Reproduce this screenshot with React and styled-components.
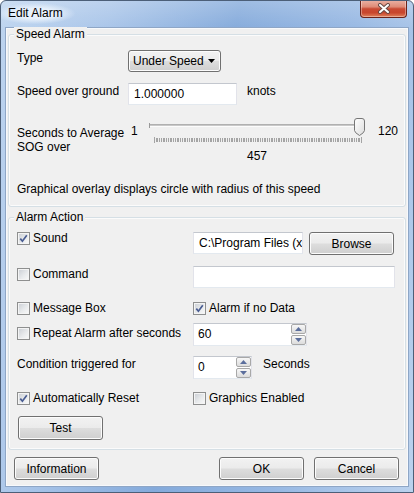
import React from 'react';
import styled, {createGlobalStyle} from 'styled-components';

const GlobalStyle = createGlobalStyle`
  html, body {
    margin: 0;
    padding: 0;
  }
  body {
    font-family: "Liberation Sans", Arial, sans-serif;
    font-size: 12px;
    color: #000;
    background: #fff;
  }
  * {
    box-sizing: border-box;
  }
`;

const buttonFace = `
  border: 1px solid #707070;
  border-radius: 3px;
  background: linear-gradient(180deg, #f2f2f2 0%, #ebebeb 48%, #dddddd 52%, #cfcfcf 100%);
  box-shadow: inset 0 0 0 1px #fcfcfc;
`;

const Window = styled.div`
  width: 414px;
  height: 493px;
  display: flex;
  flex-direction: column;
  overflow: hidden;
  border: 1px solid #4c5f78;
  border-radius: 6px 6px 0 0;
  background:
    linear-gradient(180deg, rgba(255, 255, 255, 0.22) 0%, rgba(255, 255, 255, 0) 30px),
    linear-gradient(100deg, #bdd4ef 0%, #a9c5e9 22%, #84aadb 48%, #97b8e3 72%, #bbd2ee 100%);
`;

const TitleBar = styled.div`
  flex: none;
  height: 27px;
  display: flex;
  justify-content: space-between;
  align-items: flex-start;
  padding-left: 7px;
`;

const Title = styled.span`
  margin: 2px 0 0 -12px;
  padding: 3px 12px;
  line-height: 15px;
  background: radial-gradient(ellipse at center, rgba(236, 244, 253, 0.9) 35%, rgba(236, 244, 253, 0) 72%);
`;

const CloseButton = styled.div`
  width: 47px;
  height: 18px;
  margin: -1px 6px 0 0;
  display: flex;
  align-items: center;
  justify-content: center;
  border: 1px solid #6b231a;
  border-top: none;
  border-radius: 0 0 4px 4px;
  background: linear-gradient(180deg, #ebb3a6 0%, #df8b77 40%, #c94a33 52%, #c8462d 75%, #e0825d 100%);
  box-shadow: inset 0 0 0 1px rgba(255, 255, 255, 0.35);
`;

const Client = styled.div`
  flex: 1;
  display: flex;
  flex-direction: column;
  margin: 0 5px 6px 5px;
  padding: 0 1px;
  background: #f0f0f0;
  border: 1px solid #f7f9fc;
  box-shadow: 0 0 0 1px #8ea6c6;
`;

const Group = styled.div`
  display: flex;
  flex-direction: column;
  margin-top: ${p => p.$top}px;
  padding: 0 8px 9px;
  border: 1px solid #d5dfe5;
  border-radius: 3px;
  box-shadow: inset 0 0 0 1px #fbfbfb;
`;

const Caption = styled.span`
  align-self: flex-start;
  margin: -8px 0 0 -3px;
  padding: 0 2px;
  line-height: 14px;
  background: #f0f0f0;
`;

const Row = styled.div`
  display: flex;
  align-items: flex-start;
  height: ${p => p.$h}px;
  margin-top: ${p => p.$top}px;
`;

const Label = styled.span`
  flex: none;
  width: ${p => (p.$w ? `${p.$w}px` : 'auto')};
  margin-left: ${p => p.$ml || 0}px;
  padding-top: ${p => (p.$pt === undefined ? 1 : p.$pt)}px;
  line-height: ${p => p.$lh || 15}px;
  white-space: nowrap;
`;

const Note = styled.div`
  margin-top: 19px;
  line-height: 15px;
`;

const TextBox = styled.div`
  flex: none;
  width: ${p => p.$w}px;
  height: 22px;
  padding: 0 5px;
  line-height: 20px;
  white-space: nowrap;
  overflow: hidden;
  background: #fff;
  border: 1px solid;
  border-color: #c3c7ce #e2e3ea #e3e9ef #e2e3ea;
`;

const Button = styled.button`
  flex: none;
  width: 85px;
  height: ${p => p.$h || 23}px;
  margin-left: ${p => p.$ml || 0}px;
  padding: 0;
  font-family: inherit;
  font-size: 12px;
  color: #000;
  ${buttonFace}
`;

const Select = styled.div`
  flex: none;
  width: 93px;
  height: 22px;
  display: flex;
  align-items: center;
  justify-content: space-between;
  padding: 0 5px 0 4px;
  ${buttonFace}
`;

const CheckItem = styled.label`
  flex: none;
  display: flex;
  align-items: center;
  gap: 3px;
  width: ${p => (p.$w ? `${p.$w}px` : 'auto')};
  margin-top: ${p => p.$top || 0}px;
  line-height: 13px;
  white-space: nowrap;
`;

const CheckBox = styled.span`
  flex: none;
  width: 13px;
  height: 13px;
  display: flex;
  align-items: center;
  justify-content: center;
  border: 1px solid #8e8f8f;
  background: linear-gradient(135deg, #c9cdd3 0%, #e8eaec 55%, #fafafa 100%);
  box-shadow: inset 0 0 0 1px #f4f4f4;
`;

const Spin = styled.div`
  flex: none;
  display: flex;
  width: ${p => p.$w}px;
  height: 23px;
  background: #fff;
  border: 1px solid;
  border-color: #c3c7ce #e2e3ea #e3e9ef #e2e3ea;
`;

const SpinValue = styled.span`
  flex: 1;
  padding-left: 4px;
  line-height: 21px;
`;

const SpinButtons = styled.div`
  flex: none;
  width: 15px;
  display: flex;
  flex-direction: column;
  gap: 1px;
`;

const SpinArrow = styled.div`
  flex: 1;
  display: flex;
  align-items: center;
  justify-content: center;
  border: 1px solid #a8a8a8;
  border-radius: 2px;
  background: linear-gradient(180deg, #f7f7f7 0%, #dcdcdc 100%);
`;

const SliderBox = styled.div`
  flex: none;
  width: 216px;
  display: flex;
  flex-direction: column;
`;

const SliderValue = styled.div`
  margin-top: 5px;
  line-height: 14px;
  text-align: center;
`;

const ButtonBar = styled.div`
  display: flex;
  margin-top: 7px;
  padding: 0 7px 0 6px;
`;

const Spacer = styled.div`
  flex: 1;
`;

const Check = ({checked, children, w, top}) => (
  <CheckItem $w={w} $top={top}>
    <CheckBox>
      {checked && (
        <svg width="9" height="9" viewBox="0 0 9 9">
          <path d="M1.3 4.6 L3.4 7.2 L7.8 1.2" fill="none" stroke="#4a5d92" strokeWidth="1.7" />
        </svg>
      )}
    </CheckBox>
    <span>{children}</span>
  </CheckItem>
);

const SpinControl = ({w, value}) => (
  <Spin $w={w}>
    <SpinValue>{value}</SpinValue>
    <SpinButtons>
      <SpinArrow>
        <svg width="7" height="4" viewBox="0 0 7 4">
          <polygon points="3.5,0 7,4 0,4" fill="#5b6e9c" />
        </svg>
      </SpinArrow>
      <SpinArrow>
        <svg width="7" height="4" viewBox="0 0 7 4">
          <polygon points="0,0 7,0 3.5,4" fill="#5b6e9c" />
        </svg>
      </SpinArrow>
    </SpinButtons>
  </Spin>
);

const ticks = Array.from({length: 120}, (_, i) => 5.5 + Math.round((i * 207) / 119));

const Slider = () => (
  <svg width="218" height="26" viewBox="0 0 218 26">
    <defs>
      <linearGradient id="thumb" x1="0" y1="0" x2="1" y2="1">
        <stop offset="0" stopColor="#ffffff" />
        <stop offset="1" stopColor="#dcdcdc" />
      </linearGradient>
    </defs>
    <rect x="0" y="5" width="1" height="5" fill="#9a9a9a" />
    <rect x="1" y="6" width="212" height="1" fill="#b0b0b0" />
    <rect x="1" y="7" width="212" height="1" fill="#c8c8c8" />
    <rect x="1" y="8" width="212" height="1" fill="#fcfcfc" />
    {ticks.map((x, i) => (
      <line
        key={i}
        x1={x}
        x2={x}
        y1={i === 0 || i === 119 ? 19 : 20}
        y2={i === 0 || i === 119 ? 25 : 24}
        stroke="#a4a4a4"
        strokeWidth="1"
      />
    ))}
    <path
      d="M205.5 3 Q205.5 0.5 208 0.5 H213 Q215.5 0.5 215.5 3 V12.5 Q215.5 14.5 210.5 17.5 Q205.5 14.5 205.5 12.5 Z"
      fill="url(#thumb)"
      stroke="#767676"
      strokeWidth="1"
    />
  </svg>
);

const App = () => (
  <>
    <GlobalStyle />
    <Window>
      <TitleBar>
        <Title>Edit Alarm</Title>
        <CloseButton>
          <svg width="14" height="11" viewBox="0 0 14 11">
            <path d="M3 2 L11 9 M11 2 L3 9" stroke="#6a4a45" strokeWidth="4" strokeLinecap="round" />
            <path d="M3 2 L11 9 M11 2 L3 9" stroke="#ffffff" strokeWidth="2" strokeLinecap="round" />
          </svg>
        </CloseButton>
      </TitleBar>
      <Client>
        <Group $top={5}>
          <Caption>Speed Alarm</Caption>
          <Row $h={22} $top={9}>
            <Label $w={111}>Type</Label>
            <Select>
              <span>Under Speed</span>
              <svg width="7" height="4" viewBox="0 0 7 4">
                <polygon points="0,0 7,0 3.5,4" fill="#000" />
              </svg>
            </Select>
          </Row>
          <Row $h={22} $top={11}>
            <Label $w={111}>Speed over ground</Label>
            <TextBox $w={109}>1.000000</TextBox>
            <Label $ml={10}>knots</Label>
          </Row>
          <Row $h={45} $top={13}>
            <Label $w={114} $pt={8} $lh={14}>
              Seconds to Average
              <br />
              SOG over
            </Label>
            <Label $w={18} $pt={6} $lh={14}>
              1
            </Label>
            <SliderBox>
              <Slider />
              <SliderValue>457</SliderValue>
            </SliderBox>
            <Label $ml={13} $pt={6} $lh={14}>
              120
            </Label>
          </Row>
          <Note>Graphical overlay displays circle with radius of this speed</Note>
        </Group>

        <Group $top={10}>
          <Caption>Alarm Action</Caption>
          <Row $h={23} $top={8}>
            <Check checked w={176}>
              Sound
            </Check>
            <TextBox $w={110}>C:\Program Files (x</TextBox>
            <Button $ml={6}>Browse</Button>
          </Row>
          <Row $h={22} $top={11}>
            <Check w={176} top={2}>
              Command
            </Check>
            <TextBox $w={202} />
          </Row>
          <Row $h={13} $top={14}>
            <Check w={176}>Message Box</Check>
            <Check checked>Alarm if no Data</Check>
          </Row>
          <Row $h={23} $top={8}>
            <Check w={176} top={4}>
              Repeat Alarm after seconds
            </Check>
            <SpinControl w={114} value="60" />
          </Row>
          <Row $h={23} $top={10}>
            <Label $w={176}>Condition triggered for</Label>
            <SpinControl w={59} value="0" />
            <Label $ml={11}>Seconds</Label>
          </Row>
          <Row $h={13} $top={13}>
            <Check checked w={176}>
              Automatically Reset
            </Check>
            <Check>Graphics Enabled</Check>
          </Row>
          <Row $h={24} $top={11}>
            <Button $h={24} $ml={1}>
              Test
            </Button>
          </Row>
        </Group>

        <ButtonBar>
          <Button>Information</Button>
          <Spacer />
          <Button>OK</Button>
          <Button $ml={10}>Cancel</Button>
        </ButtonBar>
      </Client>
    </Window>
  </>
);

export default App;
